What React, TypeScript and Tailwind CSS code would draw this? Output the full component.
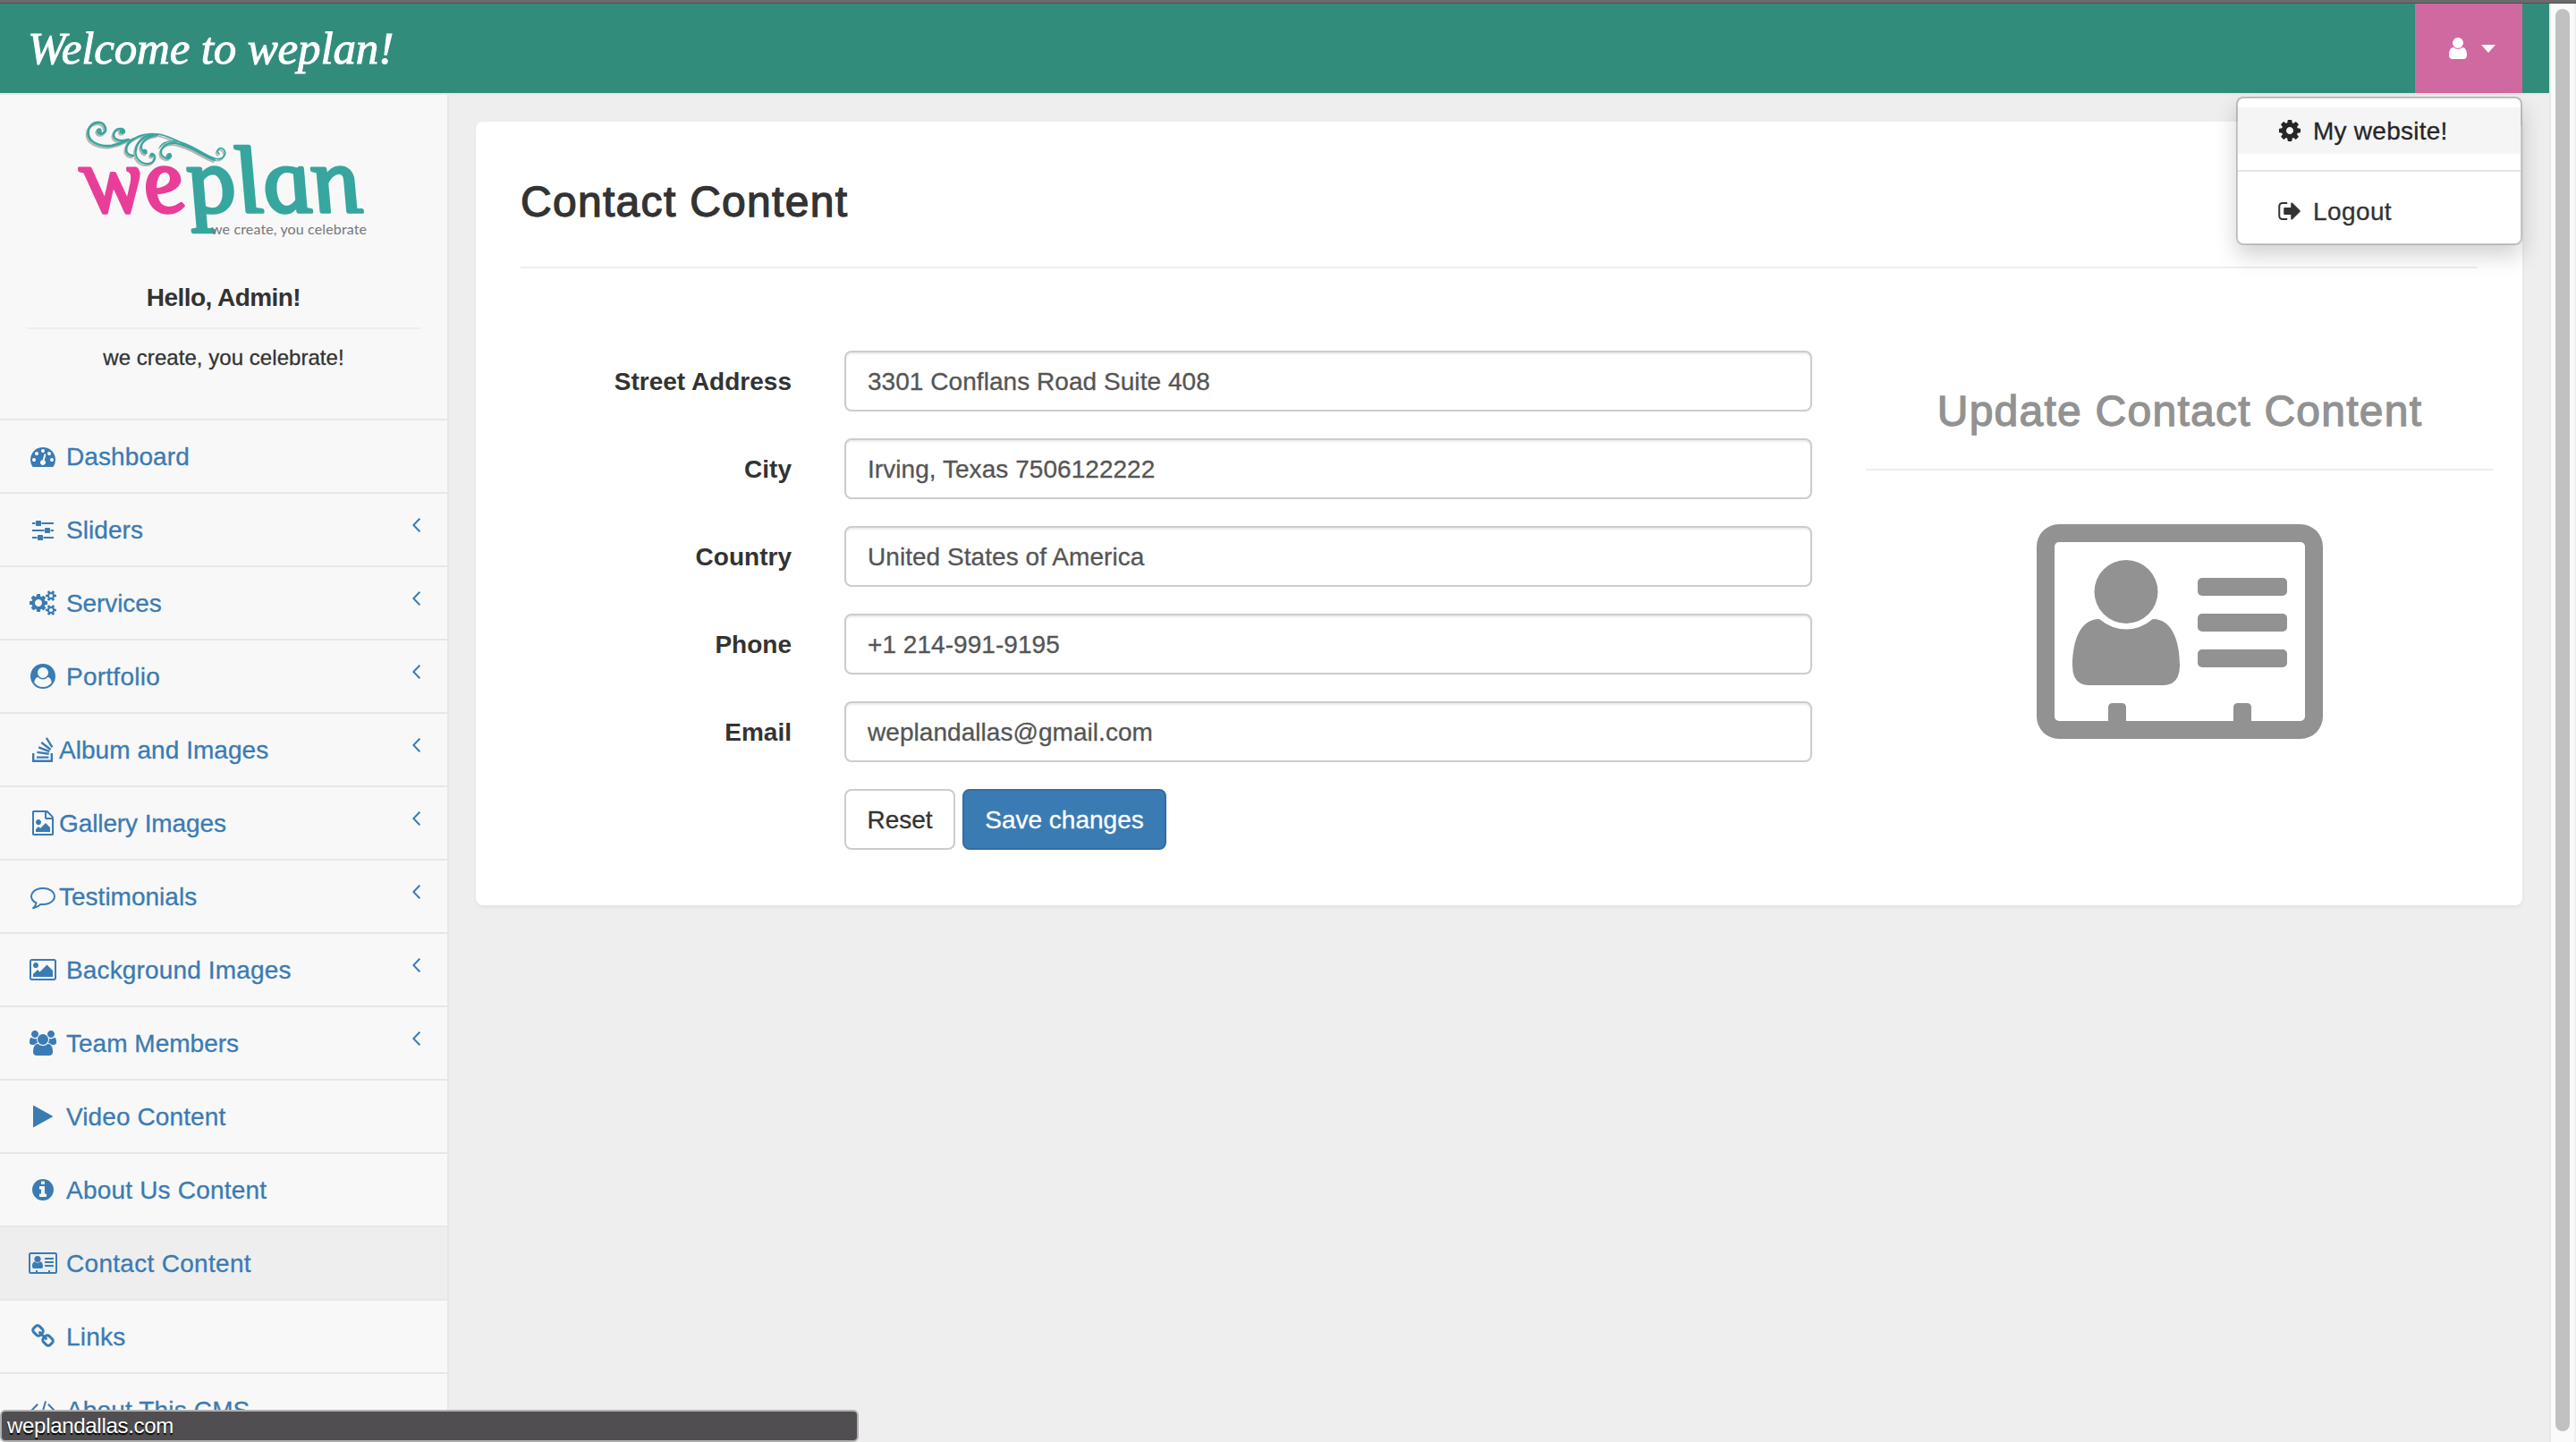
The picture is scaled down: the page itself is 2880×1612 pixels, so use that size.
import React from "react";

type Glyph = { box: string; w: number; d: string };

const smallGear = "q0 16-149 31-12 27-30 52 51 113 51 138 0 4-4 7-122 71-124 71-8 0-46-47t-52-68q-20 2-30 2t-30-2q-14 21-52 68t-46 47q-2 0-124-71-4-3-4-7 0-25 51-138-18-25-30-52-149-15-149-31v-140q0-16 149-31 13-29 30-52-51-113-51-138 0-4 4-7 4-2 35-20t59-34 30-16q8 0 46 46.5t52 67.5q20-2 30-2t30 2q51-71 92-112l6-2q4 0 124 70 4 3 4 7 0 25-51 138 17 23 30 52 149 15 149 31z";

const glyphs: Record<string, Glyph> = {
  tachometer: { box: "0 0 1792 1792", w: 28, d: "M384 1152q0-53-37.5-90.5t-90.5-37.5-90.5 37.5-37.5 90.5 37.5 90.5 90.5 37.5 90.5-37.5 37.5-90.5zm192-448q0-53-37.5-90.5t-90.5-37.5-90.5 37.5-37.5 90.5 37.5 90.5 90.5 37.5 90.5-37.5 37.5-90.5zm428 481l101-382q6-26-7.5-48.5t-38.5-29.5-48 6.5-30 39.5l-101 382q-60 5-107 43.5t-63 98.5q-20 77 20 146t117 89 146-20 89-117q16-60-6-117t-72-91zm660-33q0-53-37.5-90.5t-90.5-37.5-90.5 37.5-37.5 90.5 37.5 90.5 90.5 37.5 90.5-37.5 37.5-90.5zm-640-640q0-53-37.5-90.5t-90.5-37.5-90.5 37.5-37.5 90.5 37.5 90.5 90.5 37.5 90.5-37.5 37.5-90.5zm448 192q0-53-37.5-90.5t-90.5-37.5-90.5 37.5-37.5 90.5 37.5 90.5 90.5 37.5 90.5-37.5 37.5-90.5zm320 448q0 261-141 483-19 29-54 29h-1402q-35 0-54-29-141-221-141-483 0-182 71-348t191-286 286-191 348-71 348 71 286 191 191 286 71 348z" },
  sliders: { box: "0 0 1792 1792", w: 28, d: "M480 1408v128h-352v-128h352zm352-128q26 0 45 19t19 45v256q0 26-19 45t-45 19h-256q-26 0-45-19t-19-45v-256q0-26 19-45t45-19h256zm160-384v128h-864v-128h864zm-640-512v128h-224v-128h224zm1312 1024v128h-736v-128h736zm-960-1152q26 0 45 19t19 45v256q0 26-19 45t-45 19h-256q-26 0-45-19t-19-45v-256q0-26 19-45t45-19h256zm640 512q26 0 45 19t19 45v256q0 26-19 45t-45 19h-256q-26 0-45-19t-19-45v-256q0-26 19-45t45-19h256zm320 128v128h-224v-128h224zm0-512v128h-864v-128h864z" },
  cogs: { box: "-64 0 1920 1792", w: 30, d: "M832 896q0-106-75-181t-181-75-181 75-75 181 75 181 181 75 181-75 75-181zm768 512q0-52-38-90t-90-38-90 38-38 90q0 53 37.5 90.5t90.5 37.5 90.5-37.5 37.5-90.5zm0-1024q0-52-38-90t-90-38-90 38-38 90q0 53 37.5 90.5t90.5 37.5 90.5-37.5 37.5-90.5zm-384 421v185q0 10-7 19.5t-16 10.5l-155 24q-11 35-32 76 34 48 90 115 7 11 7 20 0 12-7 19-23 30-82.5 89.5t-78.5 59.5q-11 0-21-7l-115-90q-37 19-77 31-11 108-23 155-7 24-30 24h-186q-11 0-20-7.5t-10-17.5l-23-153q-34-10-75-31l-118 89q-7 7-20 7-11 0-21-8-144-133-144-160 0-9 7-19 10-14 41-53t47-61q-23-44-35-82l-152-24q-10-1-17-9.5t-7-19.5v-185q0-10 7-19.5t16-10.5l155-24q11-35 32-76-34-48-90-115-7-11-7-20 0-12 7-20 22-30 82-89t79-59q11 0 21 7l115 90q34-18 77-32 11-108 23-154 7-24 30-24h186q11 0 20 7.5t10 17.5l23 153q34 10 75 31l118-89q8-7 20-7 11 0 21 8 144 133 144 160 0 8-7 19-12 16-42 54t-45 60q23 48 34 82l152 23q10 2 17 10.5t7 19.5zM1856 1338v140" + smallGear + "M1856 314v140" + smallGear },
  userCircle: { box: "0 0 1792 1792", w: 28, d: "M1523 1339q-22-155-87.5-257.5t-184.5-118.5q-67 74-159.5 115.5t-195.5 41.5-195.5-41.5-159.5-115.5q-119 16-184.5 118.5t-87.5 257.5q106 150 271 237.5t356 87.5 356-87.5 271-237.5zm-243-699q0-159-112.5-271.5t-271.5-112.5-271.5 112.5-112.5 271.5 112.5 271.5 271.5 112.5 271.5-112.5 112.5-271.5zm512 256q0 182-71 347.5t-190.5 286-285.5 191.5-349 71q-182 0-348-71t-286-191-191-286-71-348 71-348 191-286 286-191 348-71 348 71 286 191 191 286 71 348z" },
  stack: { box: "0 0 28 28", w: 28, d: "M2 18h2.4v7.6h18.2V18H25v10H2zM7 21.4h13.4v2.3H7zM7.6 15.8l13.2 1.8-.3 2.3-13.2-1.8zM9.6 10.2l12.2 4.9-.9 2.2L8.700 12.400zM13 5.100l10.300 7.900-1.400 1.900L11.600 7zM18.900 .2l6.500 10.600-2 1.200L16.900 1.400z" },
  fileImage: { box: "0 0 1792 1792", w: 28, d: "M1596 380q28 28 48 76t20 88v1152q0 40-28 68t-68 28h-1344q-40 0-68-28t-28-68v-1600q0-40 28-68t68-28h896q40 0 88 20t76 48zm-444-244v376h376q-10-29-22-41l-313-313q-12-12-41-22zm384 1528v-1024h-416q-40 0-68-28t-28-68v-416h-768v1536h1280zm-128-448v320h-1024v-192l192-192 128 128 384-384zm-832-192q-80 0-136-56t-56-136 56-136 136-56 136 56 56 136-56 136-136 56z" },
  comment: { box: "0 0 1792 1792", w: 28, d: "M896 384q-204 0-381.5 69.5t-282 187.5-104.500 255q0 112 71.500 213.500t201.500 175.500l87 50-27 96q-24 91-70 172 152-63 275-171l43-38 57 6q69 8 130 8 204 0 381.500-69.500t282-187.500 104.500-255-104.500-255-282-187.500-381.500-69.500zm896 512q0 174-120 321.500t-326 233-450 85.500q-70 0-145-8-198 175-460 242-49 14-114 22h-5q-15 0-27-10.500t-16-27.500v-1q-3-4-.5-12t2-10 4.500-9.500l6-9 7-8.500 8-9q7-8 31-34.500t34.500-38 31-39.500 32.500-51 27-59 26-76q-157-89-247.500-220t-90.500-281q0-174 120-321.500t326-233 450-85.500 450 85.500 326 233 120 321.500z" },
  image: { box: "-64 0 1920 1792", w: 30, d: "M576 576q0 80-56 136t-136 56-136-56-56-136 56-136 136-56 136 56 56 136zm1024 384v448h-1408v-192l320-320 160 160 512-512zm96-704h-1600q-13 0-22.500 9.500t-9.500 22.500v1216q0 13 9.500 22.500t22.500 9.500h1600q13 0 22.500-9.500t9.500-22.500v-1216q0-13-9.500-22.500t-22.500-9.500zm160 32v1216q0 66-47 113t-113 47h-1600q-66 0-113-47t-47-113v-1216q0-66 47-113t113-47h1600q66 0 113 47t47 113z" },
  users: { box: "0 0 1920 1792", w: 30, d: "M593 896q-162 5-265 128h-134q-82 0-138-40.500t-56-118.500q0-353 124-353 6 0 43.500 21t97.500 42.500 119 21.500q67 0 133-23-5 37-5 66 0 139 81 256zm1071 637q0 120-73 189.500t-194 69.500h-874q-121 0-194-69.500t-73-189.500q0-53 3.500-103.500t14-109 26.500-108.500 43-97.500 62-81 85.500-53.500 111.500-20q10 0 43 21.500t73 48 107 48 135 21.500 135-21.500 107-48 73-48 43-21.500q61 0 111.500 20t85.500 53.500 62 81 43 97.500 26.500 108.500 14 109 3.500 103.500zm-1024-1277q0 106-75 181t-181 75-181-75-75-181 75-181 181-75 181 75 75 181zm704 384q0 159-112.500 271.500t-271.500 112.500-271.500-112.500-112.500-271.500 112.500-271.500 271.500-112.500 271.500 112.500 112.500 271.500zm576 225q0 78-56 118.500t-138 40.500h-134q-103-123-265-128 81-117 81-256 0-29-5-66 66 23 133 23 59 0 119-21.500t97.500-42.500 43.500-21q124 0 124 353zm-128-609q0 106-75 181t-181 75-181-75-75-181 75-181 181-75 181 75 75 181z" },
  play: { box: "0 0 1792 1792", w: 28, d: "M1576 927l-1328 738q-23 13-39.500 3t-16.500-36v-1472q0-26 16.500-36t39.500 3l1328 738q23 13 23 31t-23 31z" },
  info: { box: "0 0 1792 1792", w: 28, d: "M1152 1376v-160q0-14-9-23t-23-9h-96v-512q0-14-9-23t-23-9h-320q-14 0-23 9t-9 23v160q0 14 9 23t23 9h96v320h-96q-14 0-23 9t-9 23v160q0 14 9 23t23 9h448q14 0 23-9t9-23zm-128-896v-160q0-14-9-23t-23-9h-192q-14 0-23 9t-9 23v160q0 14 9 23t23 9h192q14 0 23-9t9-23zm640 416q0 209-103 385.500t-279.500 279.500-385.500 103-385.500-103-279.500-279.500-103-385.500 103-385.500 279.500-279.500 385.500-103 385.500 103 279.500 279.500 103 385.500z" },
  link: { box: "0 0 1792 1792", w: 28, d: "M1520 1216q0-40-28-68l-208-208q-28-28-68-28-42 0-72 32 3 3 19 18.500t21.500 21.500 15 19 13 25.500 3.500 27.500q0 40-28 68t-68 28q-15 0-27.500-3.500t-25.500-13-19-15-21.500-21.500-18.500-19q-33 31-33 73 0 40 28 68l206 207q27 27 68 27 40 0 68-26l147-146q28-28 28-67zm-703-705q0-40-28-68l-206-207q-28-28-68-28-39 0-68 27l-147 146q-28 28-28 67 0 40 28 68l208 208q27 27 68 27 42 0 72-31-3-3-19-18.500t-21.500-21.500-15-19-13-25.500-3.500-27.500q0-40 28-68t68-28q15 0 27.500 3.500t25.500 13 19 15 21.500 21.500 18.500 19q33-31 33-73zm895 705q0 120-85 203l-147 146q-83 83-203 83-121 0-204-85l-206-207q-83-83-83-203 0-123 88-209l-88-88q-86 88-208 88-120 0-204-84l-208-208q-84-84-84-204t85-203l147-146q83-83 203-83 121 0 204 85l206 207q83 83 83 203 0 123-88 209l88 88q86-88 208-88 120 0 204 84l208 208q84 84 84 204z" },
  code: { box: "64 0 1920 1792", w: 30, d: "M681 1399l-50 50q-10 10-23 10t-23-10l-466-466q-10-10-10-23t10-23l466-466q10-10 23-10t23 10l50 50q10 10 10 23t-10 23l-393 393 393 393q10 10 10 23t-10 23zm591-1067l-373 1291q-4 13-15.500 19.500t-23.500 2.500l-62-17q-13-4-19.500-15.500t-2.500-24.500l373-1291q4-13 15.500-19.500t23.500-2.500l62 17q13 4 19.500 15.500t2.500 24.500zm657 651l-466 466q-10 10-23 10t-23-10l-50-50q-10-10-10-23t10-23l393-393-393-393q-10-10-10-23t10-23l50-50q10-10 23-10t23 10l466 466q10 10 10 23t-10 23z" },
  cog: { box: "0 0 1792 1792", w: 28, d: "M1152 896q0-106-75-181t-181-75-181 75-75 181 75 181 181 75 181-75 75-181zm512-109v222q0 12-8 23t-20 13l-185 28q-19 54-39 91 35 50 107 138 10 12 10 25t-9 23q-27 37-99 108t-94 71q-12 0-26-9l-138-108q-44 23-91 38-16 136-29 186-7 28-36 28h-222q-14 0-24.500-8.500t-11.500-21.500l-28-184q-49-16-90-37l-141 107q-10 9-25 9-14 0-25-11-126-114-165-168-7-10-7-23 0-12 8-23 15-21 51-66.500t54-70.500q-27-50-41-99l-183-27q-13-2-21-12.500t-8-23.500v-222q0-12 8-23t19-13l186-28q14-46 39-92-40-57-107-138-10-12-10-24 0-10 9-23 26-36 98.500-107.500t94.500-71.500q13 0 26 10l138 107q44-23 91-38 16-136 29-186 7-28 36-28h222q14 0 24.500 8.500t11.500 21.500l28 184q49 16 90 37l142-107q9-9 24-9 13 0 25 10 129 119 165 170 7 8 7 22 0 12-8 23-15 21-51 66.500t-54 70.500q26 50 41 98l183 28q13 2 21 12.500t8 23.500z" },
  signOut: { box: "-16 0 1792 1792", w: 28, d: "M704 1440q0 4 1 20t.5 26.500-3 23.500-10 19.500-20.500 6.500h-320q-119 0-203.500-84.500t-84.500-203.500v-704q0-119 84.500-203.500t203.500-84.500h320q13 0 22.500 9.500t9.500 22.500q0 4 1 20t.5 26.500-3 23.500-10 19.500-20.500 6.500h-320q-66 0-113 47t-47 113v704q0 66 47 113t113 47h312l11.500 1 11.500 3 8 5.500 7 9 2 13.500zm928-544q0 26-19 45l-544 544q-19 19-45 19t-45-19-19-45v-288h-448q-26 0-45-19t-19-45v-384q0-26 19-45t45-19h448v-288q0-26 19-45t45-19 45 19l544 544q19 19 19 45z" },
};

function Icon({ name }: { name: string }) {
  if (name === "card") {
    return (
      <span className="flex w-9 shrink-0 justify-center">
        <ContactCard className="h-6 w-8" />
      </span>
    );
  }
  const g = glyphs[name];
  return (
    <span className="flex w-9 shrink-0 justify-center">
      <svg viewBox={g.box} width={g.w} height={28} fill="currentColor" fillRule="evenodd">
        <path d={g.d} />
      </svg>
    </span>
  );
}

function ContactCard({ className }: { className: string }) {
  return (
    <svg viewBox="0 0 320 240" className={className} fill="currentColor">
      <path
        fillRule="evenodd"
        d="M25 0H295a25 25 0 0 1 25 25V215a25 25 0 0 1-25 25H25a25 25 0 0 1-25-25V25A25 25 0 0 1 25 0zM25 20a5 5 0 0 0-5 5V215a5 5 0 0 0 5 5H80V205q0-5 5-5H95q5 0 5 5V220H220V205q0-5 5-5H235q5 0 5 5V220H295a5 5 0 0 0 5-5V25a5 5 0 0 0-5-5z"
      />
      <circle cx="100" cy="75.500" r="35.500" />
      <path d="M70 106Q84 117.500 100 117.500T130 106C152 106 160 132 160 158Q160 180 141 180H59Q40 180 40 158C40 132 48 106 70 106z" />
      <rect x="180" y="60" width="100" height="20" rx="5" />
      <rect x="180" y="100" width="100" height="20" rx="5" />
      <rect x="180" y="140" width="100" height="20" rx="5" />
    </svg>
  );
}

function Swirl() {
  return (
    <g fill="none" strokeLinecap="round">
      <path d="M112 148C114 145 110 143 109 146C110 152 119 150 118 143C115 134 103 135 99 145C96 158 110 164 124 163C130 162 136 160 142 157" strokeWidth="2.600" />
      <path d="M136 147C139 151 141 145 136 144C128 143 125 151 129 155C133 158 140 157 144 156" strokeWidth="2.400" />
      <path d="M141 170C140 160 152 151 166 150C190 147 212 168 240 177C250 180 254 172 250 167C246 163 240 169 245 172" strokeWidth="1.800" />
      <path d="M149 174C137 174 140 158 150 155" strokeWidth="2.400" />
      <path d="M152 166C149 182 166 187 172 180C175 175 172 170 169 174" strokeWidth="2" />
      <path d="M152 168C153 158 161 151 172 151" strokeWidth="2.400" />
      <path d="M163 170C165 172 161 172 159 168C155 162 162 153 176 151" strokeWidth="2.200" />
      <path d="M190 172C194 176 187 180 181 174C177 166 186 159 196 160C212 162 226 174 240 179" strokeWidth="2.200" />
      <path d="M179 164C183 157 194 157 202 159C216 163 228 172 238 177" strokeWidth="1.500" />
      <circle cx="162" cy="169" r="2" fill="currentColor" />
      <circle cx="170" cy="173" r="2" fill="currentColor" />
      <circle cx="189" cy="174" r="2.400" fill="currentColor" />
      <circle cx="136" cy="147" r="2" fill="currentColor" />
    </g>
  );
}

function Logo() {
  return (
    <svg viewBox="84 130 332 150" className="h-[150px] w-[332px] overflow-visible">
      <g stroke="#b5b5b5" className="text-[#b5b5b5]" transform="translate(-1.500 2)">
        <Swirl />
      </g>
      <g stroke="#37a69f" className="text-[#37a69f]">
        <Swirl />
      </g>
      <g
        fontFamily="'Liberation Serif', serif"
        fontStyle="italic"
        fontSize="106"
        strokeWidth="3.500"
        strokeLinejoin="round"
        transform="translate(0 237) skewX(15)"
      >
        <text x="99" y="0" textLength="114" lengthAdjust="spacingAndGlyphs" fill="#e83e98" stroke="#e83e98">we</text>
        <text x="216" y="0" textLength="194" lengthAdjust="spacingAndGlyphs" fill="#37a69f" stroke="#37a69f">plan</text>
      </g>
      <text x="236" y="261.500" fontFamily="Lato, sans-serif" fontSize="16" textLength="174" fill="#777">
        we create, you celebrate
      </text>
    </svg>
  );
}

const nav = [
  { label: "Dashboard", icon: "tachometer", track: "tracking-[0.1px]", gap: true, arrow: false },
  { label: "Sliders", icon: "sliders", track: "tracking-[0.05px]", gap: true, arrow: true },
  { label: "Services", icon: "cogs", track: "tracking-[-0.1px]", gap: true, arrow: true },
  { label: "Portfolio", icon: "userCircle", track: "tracking-[0.25px]", gap: true, arrow: true },
  { label: "Album and Images", icon: "stack", track: "tracking-[0.05px]", gap: false, arrow: true },
  { label: "Gallery Images", icon: "fileImage", track: "tracking-[-0.1px]", gap: false, arrow: true },
  { label: "Testimonials", icon: "comment", track: "tracking-[0.01px]", gap: false, arrow: true },
  { label: "Background Images", icon: "image", track: "tracking-[0.15px]", gap: true, arrow: true },
  { label: "Team Members", icon: "users", track: "tracking-[0.01px]", gap: true, arrow: true },
  { label: "Video Content", icon: "play", track: "tracking-[0.1px]", gap: true, arrow: false },
  { label: "About Us Content", icon: "info", track: "tracking-[0.2px]", gap: true, arrow: false },
  { label: "Contact Content", icon: "card", track: "tracking-[0.3px]", gap: true, arrow: false, active: true },
  { label: "Links", icon: "link", track: "tracking-[0.2px]", gap: true, arrow: false },
  { label: "About This CMS", icon: "code", track: "tracking-[0.15px]", gap: true, arrow: false },
];

const fields = [
  ["Street Address", "3301 Conflans Road Suite 408"],
  ["City", "Irving, Texas 7506122222"],
  ["Country", "United States of America"],
  ["Phone", "+1 214-991-9195"],
  ["Email", "weplandallas@gmail.com"],
];

function Header() {
  return (
    <header className="flex h-[102px] border-b-2 border-[#e7e7e7] bg-[#328c7c] bg-clip-padding pr-[30px]">
      <h1 className="flex-1 pl-[31px] font-['Liberation_Serif',serif] text-[51px] leading-[100px] tracking-[-0.15px] whitespace-nowrap text-white italic [-webkit-text-stroke:1px_white]">
        Welcome to weplan!
      </h1>
      <div className="relative flex w-[120px] items-center bg-[#d069a0] text-white">
        <svg viewBox="0 0 1792 1792" className="ml-[34px] h-7 w-7" fill="currentColor">
          <path d="M1536 1399q0 109-62.500 187t-150.500 78h-854q-88 0-150.500-78t-62.500-187q0-85 8.500-160.500t31.500-152 58.500-131 94-89 134.500-34.500q131 128 313 128t313-128q76 0 134.500 34.500t94 89 58.500 131 31.500 152 8.500 160.500zm-256-887q0 159-112.500 271.500t-271.500 112.500-271.500-112.500-112.500-271.500 112.500-271.500 271.500-112.500 271.500 112.500 112.500 271.500z" />
        </svg>
        <svg viewBox="0 0 16 9" className="ml-3 h-[9px] w-4" fill="currentColor">
          <path d="M0 0H16L8 9z" />
        </svg>
        <div className="absolute top-[104px] right-0 z-10 flex h-[166px] w-80 flex-col rounded-lg border-2 border-black/20 bg-white bg-clip-padding pt-[10px] text-[28px] leading-[52px] text-[#333] shadow-[0_12px_24px_rgba(0,0,0,0.175)]">
          <a className="flex h-[52px] items-center bg-[#f5f5f5] pl-10 text-[#262626]">
            <Icon name="cog" />
            <span className="mt-px ml-2 tracking-[0.25px] [-webkit-text-stroke:0.3px]">My website!</span>
          </a>
          <div className="my-[18px] h-[2px] shrink-0 bg-[#e5e5e5]" />
          <a className="flex h-[52px] items-center pl-10">
            <Icon name="signOut" />
            <span className="mt-px ml-2 tracking-[0.4px] [-webkit-text-stroke:0.3px]">Logout</span>
          </a>
        </div>
      </div>
    </header>
  );
}

function Sidebar() {
  return (
    <aside className="w-[502px] shrink-0 overflow-hidden border-r-2 border-[#e7e7e7] bg-[#f8f8f8]">
      <div className="flex h-[364px] flex-col items-center border-b-2 border-[#e7e7e7] pt-6">
        <Logo />
        <p className="mt-[33px] text-[28px] leading-10 font-bold tracking-[-0.550px] text-[#333]">Hello, Admin!</p>
        <hr className="mt-[13px] w-[440px] border-t-2 border-[#eee]" />
        <p className="mt-[14px] text-[24px] leading-9 tracking-[0.05px] text-[#333] [-webkit-text-stroke:0.3px]">we create, you celebrate!</p>
      </div>
      <nav>
        {nav.map((n) => (
          <a
            key={n.label}
            className={`flex h-[82px] items-center border-b-2 border-[#e7e7e7] pr-[30px] pl-[30px] text-[28px] text-[#3b7bb3] ${n.active ? "bg-[#eee]" : ""}`}
          >
            <Icon name={n.icon} />
            <span className={`mt-px flex-1 whitespace-nowrap [-webkit-text-stroke:0.3px] ${n.track} ${n.gap ? "ml-2" : ""}`}>
              {n.label}
            </span>
            {n.arrow && (
              <svg viewBox="0 0 9 16" className="mb-[11px] h-4 w-[9px]" fill="none" stroke="currentColor" strokeWidth="2">
                <path d="M8.300 .7L1.300 8l7 7.300" />
              </svg>
            )}
          </a>
        ))}
      </nav>
    </aside>
  );
}

export default function App() {
  return (
    <div className="relative flex h-[1612px] w-[2880px] flex-col overflow-hidden bg-[#eee] font-['Liberation_Sans',Arial,sans-serif]">
      <div className="h-1 shrink-0 border-b border-[#505050] bg-[#6b6b6b]" />
      <div className="flex min-h-0 flex-1">
        <div className="flex min-w-0 flex-1 flex-col">
          <Header />
          <div className="flex min-h-0 flex-1">
            <Sidebar />
            <main className="flex-1 pt-[30px] pr-[30px] pl-[30px]">
              <section className="h-[876px] rounded-lg bg-white px-[50px] pt-[59px] shadow-[0_2px_4px_rgba(0,0,0,0.06)]">
                <h2 className="text-[48px] leading-[62px] tracking-[1.3px] text-[#333] [-webkit-text-stroke:1.3px_#333]">Contact Content</h2>
                <hr className="mt-[41px] border-t-2 border-[#eee]" />
                <div className="mt-[92px] flex">
                  <form className="flex w-[1444px] flex-col gap-[30px] text-[28px]">
                    {fields.map(([label, value]) => (
                      <div key={label} className="flex items-center">
                        <label className="w-[303px] pt-px text-right font-bold tracking-[0.01px] text-[#333]">{label}</label>
                        <div className="ml-[59px] h-[68px] flex-1 rounded-lg border-2 border-[#ccc] px-6 leading-[65px] tracking-[0.05px] text-[#555] shadow-[inset_0_2px_2px_rgba(0,0,0,0.075)] [-webkit-text-stroke:0.3px]">
                          {value}
                        </div>
                      </div>
                    ))}
                    <div className="flex gap-2 pl-[362px]">
                      <button type="button" className="h-[68px] w-[124px] rounded-lg border-2 border-[#ccc] bg-white pt-px text-[#333] [-webkit-text-stroke:0.3px]">Reset</button>
                      <button type="button" className="h-[68px] w-[228px] rounded-lg border-2 border-[#346da3] bg-[#3b7bb3] pt-px text-white [-webkit-text-stroke:0.3px]">Save changes</button>
                    </div>
                  </form>
                  <div className="mr-[-18px] ml-[60px] flex flex-1 flex-col items-center text-[#929292]">
                    <h3 className="mt-[38px] text-[48px] leading-[60px] tracking-[1.25px] whitespace-nowrap [-webkit-text-stroke:1.3px_#929292]">Update Contact Content</h3>
                    <hr className="mt-[34px] w-full border-t-2 border-[#eee]" />
                    <ContactCard className="mt-[60px] h-60 w-80" />
                  </div>
                </div>
              </section>
            </main>
          </div>
        </div>
        <div className="flex w-[30px] justify-center border-x-2 border-l-[#e8e8e8] border-r-[#f0f0f0] bg-[#fafafa] pt-[6px] pb-3">
          <div className="w-4 rounded-full bg-[#c1c1c1]" />
        </div>
      </div>
      <div className="absolute bottom-0 left-0 h-9 w-[960px] rounded-md border-2 border-[#b0b0b0] bg-[#504e50] pl-[6px] text-[24px] leading-[32px] tracking-[-0.3px] text-white [text-shadow:0_2px_1px_#000]">
        weplandallas.com
      </div>
    </div>
  );
}
